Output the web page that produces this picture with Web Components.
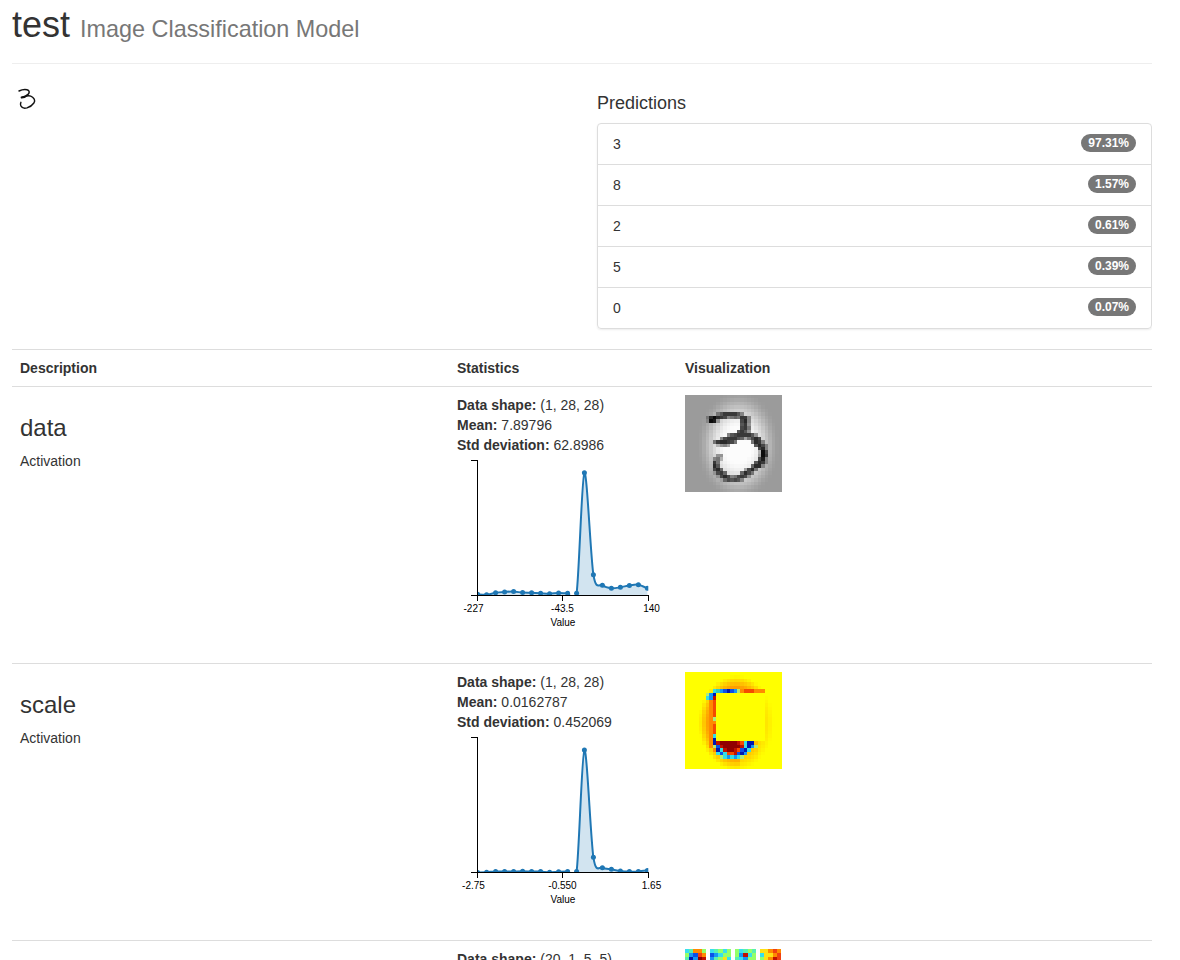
<!DOCTYPE html>
<html lang="en">
<head>
<meta charset="utf-8">
<title>test</title>
<style>
html,body{margin:0;height:960px;overflow:hidden;background:#fff}
body{font:14px/20px "Liberation Sans",Arial,sans-serif;color:#333}
</style>
</head>
<body>
<model-page></model-page>
<script>
const define = (name, cls) => customElements.define(name, cls);
class Base extends HTMLElement {
  constructor() { super(); this.attachShadow({mode: 'open'}); }
  connectedCallback() { this.shadowRoot.innerHTML = this.view(); }
}

define('page-header', class extends Base {
  view() { return `<style>:host{display:block;border-bottom:1px solid #eee;height:58px;padding-top:5px}
    h1{margin:0;font-size:36px;font-weight:400;line-height:39.6px}
    small{font-size:23.4px;color:#777;line-height:1}</style>
    <h1><slot></slot> <small><slot name="kind"></slot></small></h1>`; }
});

define('digit-image', class extends Base {
  view() { return `<style>:host{display:block;width:28px;height:28px}svg{display:block}</style>
    <svg width="28" height="28" viewBox="0 0 28 28" fill="none" stroke="#111" stroke-linecap="round" stroke-linejoin="round">
    <path stroke-width="1.5" d="M7 7C9.2 5.9 12.6 5.2 15 5.7C17.3 6.2 17.8 8.2 16.4 9.9C15.2 11.3 12.8 12.6 9.8 13.4"/>
    <path stroke-width="2" d="M9.6 13.4L12.6 12.9"/>
    <path stroke-width="1.4" d="M12.6 13C15 11.6 18.4 11.4 20.6 13.2C22.8 15 23 17.2 21.9 19C20.4 21.2 17.6 23 15 23.9C12.4 24.7 10 24 8.9 21.9C8.3 20.6 8.3 19.4 8.9 18.3"/></svg>`; }
});

define('prediction-item', class extends Base {
  view() { return `<style>:host{display:flex;justify-content:space-between;align-items:flex-start;height:20px;padding:10px 15px;border-top:1px solid #ddd}
    :host(:first-child){border-top:0}
    b{display:block;background:#777;color:#fff;font-size:12px;line-height:12px;padding:3px 7px;border-radius:10px}</style>
    <span>${this.getAttribute('label')}</span><b><slot></slot></b>`; }
});

define('prediction-list', class extends Base {
  view() { return `<style>:host{display:block;width:555px}
    h4{font-size:18px;line-height:20px;font-weight:400;margin:0 0 10px}
    div{border:1px solid #ddd;border-radius:4px;box-shadow:0 1px 2px rgba(0,0,0,.075)}
    ::slotted(:first-child){border-top:0}</style>
    <h4>Predictions</h4><div><slot></slot></div>`; }
});

// Smoothed histogram with an axis frame and three x labels.
define('histo-chart', class extends Base {
  view() {
    const ys = this.getAttribute('points').split(',').map(Number);
    const xs = ys.map((_, i) => i < 12 ? 20.6 + 9 * i : i === 12 ? 127.4 : 136.4 + 9 * (i - 13));
    const n = ys.length, p = ys.map((y, i) => [xs[i], y]);
    const tan = i => { const a = p[Math.max(0, i - 1)], b = p[Math.min(n - 1, i + 1)];
      return [(b[0] - a[0]) * .15, (b[1] - a[1]) * .15]; };
    let d = `M${p[0]}`;
    for (let i = 1; i < n; i++) {
      const t = tan(i - 1), u = tan(i);
      d += `C${p[i-1][0] + t[0]} ${p[i-1][1] + t[1]} ${p[i][0] - u[0]} ${p[i][1] - u[1]} ${p[i]}`;
    }
    const labels = this.getAttribute('labels').split(',');
    return `<style>:host{display:block;height:200px}svg{display:block}
      text{font:10px "Liberation Sans",Arial,sans-serif;text-anchor:middle;fill:#000}</style>
      <svg width="212" height="200"><defs><clipPath id="c"><rect x="20" y="0" width="171.3" height="141"/></clipPath></defs>
      <g clip-path="url(#c)"><path d="${d}V140.5H20.6Z" fill="#1f77b4" fill-opacity=".2"/>
      <path d="${d}" fill="none" stroke="#1f77b4" stroke-width="2"/>
      ${p.map(q => `<circle cx="${q[0]}" cy="${q[1]}" r="2.5" fill="#1f77b4"/>`).join('')}</g>
      <path d="M14 5.5H20.5V140.5H14M20.5 146V140.5H191.5V146M105.5 140.5V146" fill="none" stroke="#000" shape-rendering="crispEdges"/>
      <text x="16.5" y="157">${labels[0]}</text><text x="105.5" y="157">${labels[1]}</text><text x="194.5" y="157">${labels[2]}</text>
      <text x="106" y="171">Value</text></svg>`;
  }
});

const cells = (w, h, colour, width, height, rows = h) => {
  let out = '';
  for (let r = 0; r < rows; r++) for (let c = 0; c < w; c++)
    out += `<rect x="${c}" y="${r}" width="1.02" height="1.02" fill="${colour(r, c)}"/>`;
  return `<svg width="${width}" height="${height}" viewBox="0 0 ${w} ${h}" preserveAspectRatio="none" shape-rendering="crispEdges">${out}</svg>`;
};

// Each entry: row, first column, then one shade per cell (0 black .. f white).
const STROKE = [
  [5,8,'b75333358'],[6,6,'720234876'],[6,15,'7338'],[7,6,'8019'],[7,16,'428'],[8,16,'539'],[9,16,'437'],
  [10,15,'5359'],[11,12,'854333359'],[12,10,'8433356a7424'],[13,8,'7322347'],[13,19,'7238'],[14,9,'b98a'],[14,20,'5248'],[15,21,'428'],[16,21,'b04'],[17,21,'a03'],[17,9,'99'],
  [18,8,'87b'],[18,21,'418'],[19,8,'37'],[19,20,'5238'],[20,8,'25'],[20,19,'6228'],[21,8,'426'],[21,17,'a427'],
  [22,8,'9436'],[22,16,'6247'],[23,9,'94248'],[23,14,'74349'],[24,10,'a645458']
];
const HEAT = [
  [5,8,'CgbBNBbG'],[5,16,'orrrooo'],[6,6,'GbNC'],[6,9,'y'],[7,6,'CbR'],[8,7,'or'],[9,7,'or'],[10,7,'or'],[11,7,'or'],[12,7,'or'],
  [13,7,'oG'],[14,7,'oo'],[15,7,'or'],[16,7,'or'],[17,7,'or'],[18,7,'oC'],[19,7,'oN'],
  [20,7,'oNRDDDDDRrCNN'],[21,7,'oGBRDDDDDRCNbG'],[22,8,'oNCRDDRrBNC'],[23,9,'CBCrrRBNb'],[24,10,'GCbCbCG']
];
const HUES = {y:'#ffff00',g:'#30c8c0',G:'#b0ec78',C:'#35dde4',b:'#1596f4',B:'#0b50e8',N:'#0018b0',o:'#ff8a00',r:'#f44b00',R:'#c01000',D:'#900000'};
const lookup = (list, r, c) => { let hit; for (const [row, c0, s] of list)
  if (row === r && c >= c0 && c < c0 + s.length) hit = s[c - c0]; return hit; };
const clamp = v => Math.max(0, Math.min(1, v));

define('activation-map', class extends Base {
  view() {
    const grey = (r, c) => {
      const k = lookup(STROKE, r, c);
      let v;
      if (k) v = parseInt(k, 16) * 15 + 12;
      else {
        const d = Math.hypot((c - 14.8) / 8, (r - 14) / 10.5);
        const f = clamp((1.5 - d) / 1.05);
        v = Math.round(155 + 97 * f * f * (3 - 2 * f));
      }
      return `rgb(${v},${v},${v})`;
    };
    const heat = (r, c) => {
      const k = lookup(HEAT, r, c);
      if (k) return HUES[k];
      if (r > 5 && r < 20 && c > 8 && c < 23) return '#ff0';
      const d = Math.hypot((c - 14.3) / 8, (r - 14.2) / 10);
      const side = c > 20 && r > 5 ? .32 : r > 19 && c > 15 ? .5 : 1;
      const g = Math.round(255 - 145 * side * clamp((1.35 - d) / .48));
      return `rgb(255,${g},0)`;
    };
    return `<style>:host{display:block;width:97px;height:97px}svg{display:block}</style>` +
      cells(28, 28, this.getAttribute('kind') === 'heat' ? heat : grey, 97, 97);
  }
});

const TILES = [
  ['Ctoog','gbBro','tNbDR'],
  ['CtgCg','BbCgg','btgyC'],
  ['gCtgt','gbRCg','tCbgg'],
  ['yyoro','Cyyor','gyoRr']
];
define('filter-grid', class extends Base {
  view() {
    const hue = {...HUES, t:'#58f0b0', g:'#94ff69', y:'#ffe014', r:'#f04010', C:'#38e0ee'};
    return `<style>:host{display:flex;gap:4px}svg{display:block}</style>` +
      TILES.map(t => cells(5, 3, (r, c) => hue[t[r][c]], 21, 12)).join('');
  }
});

define('layer-row', class extends Base {
  view() {
    const a = n => this.getAttribute(n);
    return `<style>:host{display:grid;grid-template-columns:437px 228px 475px;border-top:1px solid #ddd}
    div{padding:8px}h3{margin:20px 0 10px;font-size:24px;line-height:26.4px;font-weight:400}</style>
    <div>${a('name') ? `<h3>${a('name')}</h3>${a('type')}` : ''}</div>
    <div><b>Data shape:</b> ${a('shape')}${a('mean') ? `<br><b>Mean:</b> ${a('mean')}<br>
    <b>Std deviation:</b> ${a('std')}` : ''}<slot name="chart"></slot></div>
    <div><slot></slot></div>`; }
});

define('layer-table', class extends Base {
  view() { return `<style>:host{display:block;margin-top:20px}
    header{display:grid;grid-template-columns:437px 228px 475px;border-top:1px solid #ddd;font-weight:700}
    span{padding:8px}</style>
    <header><span>Description</span><span>Statistics</span><span>Visualization</span></header><slot></slot>`; }
});

define('model-page', class extends Base {
  view() { return `<style>:host{display:block;width:1140px;height:960px;overflow:hidden;margin-left:12px}
    section{display:flex;justify-content:space-between;margin-top:20px}
    prediction-list{margin-top:9px}</style>
    <page-header>test<span slot="kind">Image Classification Model</span></page-header>
    <section><digit-image></digit-image>
      <prediction-list>
        <prediction-item label="3">97.31%</prediction-item>
        <prediction-item label="8">1.57%</prediction-item>
        <prediction-item label="2">0.61%</prediction-item>
        <prediction-item label="5">0.39%</prediction-item>
        <prediction-item label="0">0.07%</prediction-item>
      </prediction-list></section>
    <layer-table>
      <layer-row name="data" type="Activation" shape="(1, 28, 28)" mean="7.89796" std="62.8986">
        <histo-chart slot="chart" labels="-227,-43.5,140" points="139.3,139.8,137.7,136.9,136.6,137.6,137.8,138.2,138.7,138,138.3,138.2,17.7,119.7,130.3,133.3,132.3,130.4,129.7,133.3"></histo-chart>
        <activation-map kind="grey"></activation-map>
      </layer-row>
      <layer-row name="scale" type="Activation" shape="(1, 28, 28)" mean="0.0162787" std="0.452069">
        <histo-chart slot="chart" labels="-2.75,-0.550,1.65" points="140.4,140.2,139.4,139.6,139.5,139.3,139.6,139.6,140.2,139.7,139.4,139.4,18,125.3,135.7,137.3,139,139.6,139.4,138.4"></histo-chart>
        <activation-map kind="heat"></activation-map>
      </layer-row>
      <layer-row shape="(20, 1, 5, 5)">
        <filter-grid></filter-grid>
      </layer-row>
    </layer-table>`; }
});
</script>
</body>
</html>
